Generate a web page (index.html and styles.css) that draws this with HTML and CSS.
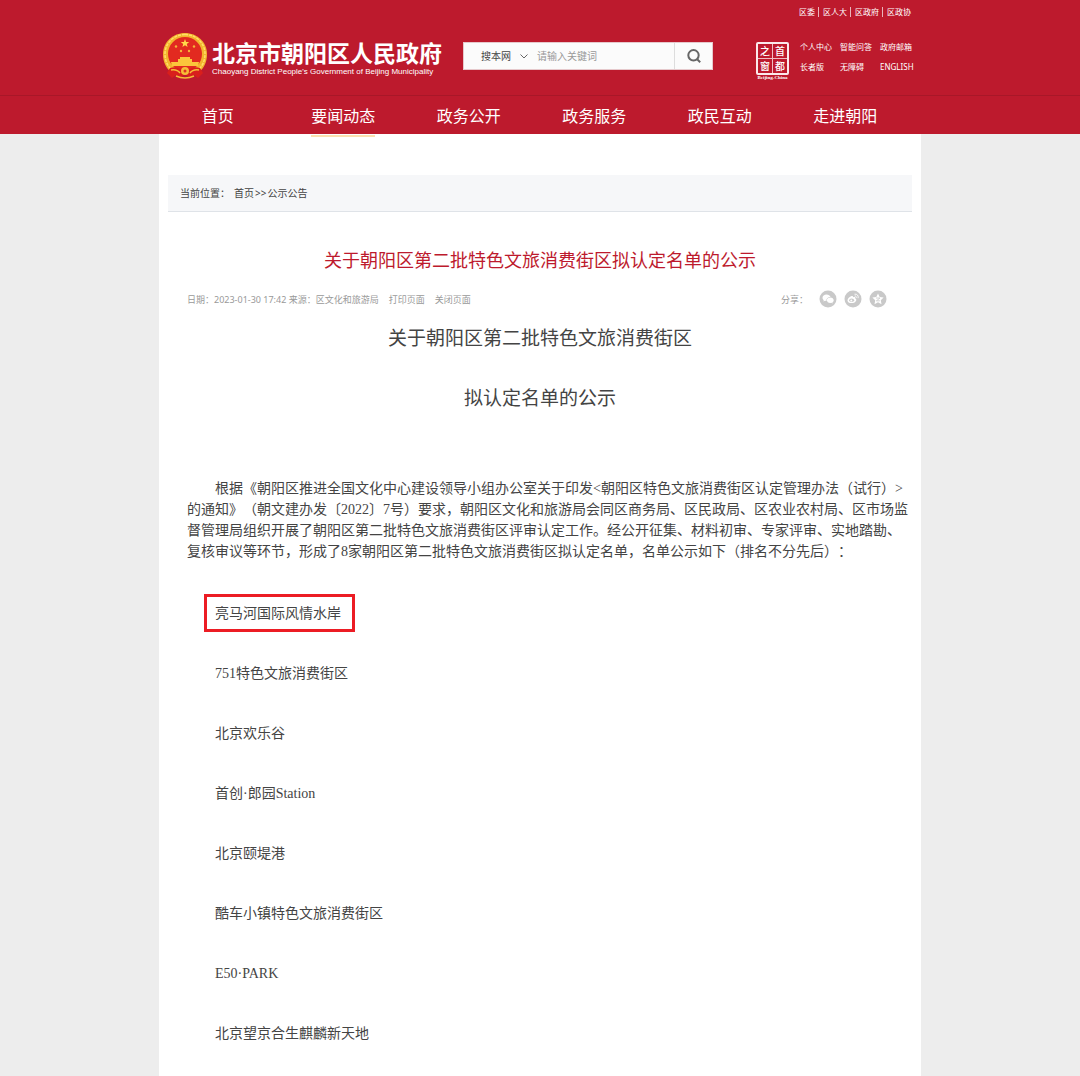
FILE: index.html
```html
<!DOCTYPE html>
<html lang="zh-CN">
<head>
<meta charset="utf-8">
<meta name="viewport" content="width=device-width, initial-scale=1">
<title>关于朝阳区第二批特色文旅消费街区拟认定名单的公示</title>
<link rel="stylesheet" href="styles.css">
</head>
<body>
<header class="site-header">
  <div class="wrap">
    <ul class="top-links">
      <li><a href="#">区委</a></li>
      <li><a href="#">区人大</a></li>
      <li><a href="#">区政府</a></li>
      <li><a href="#">区政协</a></li>
    </ul>
    <div class="masthead">
      <a class="brand" href="#">
        <svg class="emblem" viewBox="0 0 44 46" aria-hidden="true">
          <path d="M22 0C10 0 0 9 0 21c0 8 3 14 8 18l28 0c5-4 8-10 8-18C44 9 34 0 22 0z" fill="#f3b52e"/>
          <path d="M22 1.500C11 1.500 2 10 2 21c0 7 3 13 7 16" fill="none" stroke="#ffdf68" stroke-width="1.500" stroke-dasharray="3 1"/>
          <path d="M22 1.500C33 1.500 42 10 42 21c0 7-3 13-7 16" fill="none" stroke="#ffdf68" stroke-width="1.500" stroke-dasharray="3 1"/>
          <circle cx="22" cy="21" r="17" fill="#e22a20"/>
          <path d="M22 6l1.100 2.900 3.100.1-2.400 1.900.8 3-2.600-1.700-2.600 1.700.8-3-2.400-1.900 3.100-.1z" fill="#ffd84a"/>
          <g fill="#f5b43a"><circle cx="13" cy="13.500" r="1.200"/><circle cx="31" cy="13.500" r="1.200"/><circle cx="18" cy="18" r="1.200"/><circle cx="26" cy="18" r="1.200"/></g>
          <path d="M17 24h10v3H17zM15 26h14v3H15zM8 29h28l-1 4H9z" fill="#fbc63b"/>
          <path d="M7 35q6-2 10 1l5-2 5 2q4-3 10-1l3 5-5 5-4-3-5 2-4-3-4 3-5-2-4 3-5-5z" fill="#d91f1c"/>
          <circle cx="22" cy="38" r="4" fill="#f6bd37"/>
          <circle cx="22" cy="38" r="1.500" fill="#df3322"/>
          <path d="M8 37q6-1 9 3M36 37q-6-1-9 3M13 43q9 4 18 0" fill="none" stroke="#f6bd37" stroke-width="1.600"/>
        </svg>
        <span class="brand-text">
          <strong class="brand-name">北京市朝阳区人民政府</strong>
          <span class="brand-en">Chaoyang District People's Government of Beijing Municipality</span>
        </span>
      </a>
      <form class="search">
        <select class="search-scope" aria-label="搜索范围"><option>搜本网</option></select>
        <svg class="chevron" viewBox="0 0 8 5" aria-hidden="true"><path d="M.5.5L4 4 7.500.5" fill="none" stroke="#666"/></svg>
        <input class="search-input" type="text" placeholder="请输入关键词" aria-label="请输入关键词">
        <button class="search-button" type="submit" aria-label="搜索">
          <svg class="search-icon" viewBox="0 0 14 14" aria-hidden="true"><circle cx="6.500" cy="6.300" r="5.200"/><path d="M10.200 10.200l3 3"/></svg>
        </button>
      </form>
      <a class="capital" href="#">
        <span class="seal"><span>之</span><span>首</span><span>窗</span><span>都</span></span>
        <span class="seal-en">Beijing-China</span>
      </a>
      <ul class="quick-links">
        <li><a href="#">个人中心</a></li>
        <li><a href="#">智能问答</a></li>
        <li><a href="#">政府邮箱</a></li>
        <li><a href="#">长者版</a></li>
        <li><a href="#">无障碍</a></li>
        <li><a href="#">ENGLISH</a></li>
      </ul>
    </div>
  </div>
  <nav class="main-nav">
    <ul class="nav-list">
      <li><a href="#">首页</a></li>
      <li><a class="current" href="#">要闻动态</a></li>
      <li><a href="#">政务公开</a></li>
      <li><a href="#">政务服务</a></li>
      <li><a href="#">政民互动</a></li>
      <li><a href="#">走进朝阳</a></li>
    </ul>
  </nav>
</header>
<main class="page">
  <div class="breadcrumb"><span>当前位置：</span><span><a href="#">首页</a><span class="crumb-sep">&gt;&gt;</span><a href="#">公示公告</a></span></div>
  <article class="article">
    <h1 class="title">关于朝阳区第二批特色文旅消费街区拟认定名单的公示</h1>
    <div class="meta">
      <div class="meta-info">
        <span>日期：2023-01-30 17:42 来源：区文化和旅游局</span>
        <a href="#">打印页面</a>
        <a href="#">关闭页面</a>
      </div>
      <div class="share">
        <span class="share-label">分享：</span>
        <a href="#" aria-label="微信"><svg class="share-icon" viewBox="0 0 18 18"><circle cx="9" cy="9" r="8.500" fill="#c9c9c9"/><path d="M7.500 4.500c-2.300 0-4 1.400-4 3.200 0 1 .5 1.800 1.300 2.400l-.4 1.400 1.600-.8 1.500.2c-.4-2.400 1.500-4 4-4-.5-1.500-2-2.400-4-2.400z" fill="#fff"/><path d="M11.300 7.500c-2 0-3.400 1.100-3.400 2.700s1.500 2.700 3.400 2.700l1.100-.1 1.300.7-.3-1.200c.8-.5 1.300-1.200 1.300-2.100 0-1.500-1.500-2.700-3.400-2.700z" fill="#fff"/></svg></a>
        <a href="#" aria-label="微博"><svg class="share-icon" viewBox="0 0 18 18"><circle cx="9" cy="9" r="8.500" fill="#c9c9c9"/><path d="M7.500 6c1.200-.4 1.800.2 1.500 1.300 1.700-.5 2.700.1 2.200 1.200 1 .4 1.300 1 1 1.900-.5 1.600-2.400 2.700-4.700 2.700-2.400 0-4-1.100-4-2.700C3.500 8.800 5.600 6.600 7.500 6z" fill="#fff"/><ellipse cx="7.600" cy="10.300" rx="2.500" ry="1.800" fill="#c9c9c9"/><circle cx="7.300" cy="10.400" r="1" fill="#fff"/><path d="M10.500 4.200c2.600-.5 4.200 1.500 3.600 4M10.700 6c1.200-.2 1.900.7 1.600 1.800" fill="none" stroke="#fff" stroke-width=".9"/></svg></a>
        <a href="#" aria-label="QQ空间"><svg class="share-icon" viewBox="0 0 18 18"><circle cx="9" cy="9" r="8.500" fill="#c9c9c9"/><path d="M9 3.500l1.700 3.600 3.900.5-2.800 2.700.7 3.900L9 12.300l-3.500 1.900.7-3.900-2.800-2.700 3.900-.5z" fill="#fff"/><path d="M7 8h4l-3.600 2.800h3.500" fill="none" stroke="#c9c9c9" stroke-width=".8"/></svg></a>
      </div>
    </div>
    <h2 class="subtitle">关于朝阳区第二批特色文旅消费街区<br>拟认定名单的公示</h2>
    <div class="content">
      <p class="intro">根据《朝阳区推进全国文化中心建设领导小组办公室关于印发&lt;朝阳区特色文旅消费街区认定管理办法（试行）&gt;的通知》（朝文建办发〔2022〕7号）要求，朝阳区文化和旅游局会同区商务局、区民政局、区农业农村局、区市场监督管理局组织开展了朝阳区第二批特色文旅消费街区评审认定工作。经公开征集、材料初审、专家评审、实地踏勘、复核审议等环节，形成了8家朝阳区第二批特色文旅消费街区拟认定名单，名单公示如下（排名不分先后）：</p>
      <p><span class="marked">亮马河国际风情水岸</span></p>
      <p>751特色文旅消费街区</p>
      <p>北京欢乐谷</p>
      <p>首创·郎园Station</p>
      <p>北京颐堤港</p>
      <p>酷车小镇特色文旅消费街区</p>
      <p>E50·PARK</p>
      <p>北京望京合生麒麟新天地</p>
    </div>
  </article>
</main>
</body>
</html>
```

FILE: styles.css
```css
* { box-sizing: border-box; }

body {
  margin: 0;
  background: #ededed;
  color: #444;
  font-family: "Noto Sans", "Noto Sans CJK SC", sans-serif;
  text-spacing-trim: space-all;
}

a { color: inherit; text-decoration: none; }
ul { list-style: none; margin: 0; padding: 0; }
svg { display: block; }

.wrap { max-width: 762px; margin: 0 auto; }

/* Header */
.site-header { background: #bd1a2d; color: #fff; }

.top-links {
  display: flex;
  justify-content: flex-end;
  padding: 7px 10px 0 0;
  font-size: 8px;
  line-height: 10px;
}
.top-links li + li {
  margin-left: 3px;
  padding-left: 4px;
  border-left: 1px solid #e9b4ba;
}

.masthead {
  display: flex;
  align-items: flex-start;
  height: 78px;
  padding: 16px 0 0 4px;
}

.brand { display: flex; gap: 5px; width: 279px; }
.emblem { flex: none; width: 44px; height: 46px; }
.brand-text { display: flex; flex-direction: column; padding-top: 6px; }
.brand-name { font-size: 23px; line-height: 28px; white-space: nowrap; }
.brand-en {
  font-family: "Liberation Sans", Arial, sans-serif;
  font-size: 8px;
  line-height: 10px;
  white-space: nowrap;
}

.search {
  position: relative;
  display: flex;
  width: 250px;
  height: 28px;
  margin: 9px 0 0 21px;
  background: #fbfbfb;
  border: 1px solid #e6c9cc;
}
.search-scope,
.search-input,
.search-button {
  margin: 0;
  padding: 0;
  border: 0;
  background: none;
  font-family: inherit;
  font-size: 10px;
  color: #444;
}
.search-scope { appearance: none; width: 73px; padding-left: 17px; }
.chevron {
  position: absolute;
  left: 56px;
  top: 11px;
  width: 8px;
  height: 5px;
  pointer-events: none;
}
.search-input { flex: 1; min-width: 0; }
.search-input::placeholder { color: #999; opacity: 1; }
.search-button {
  display: grid;
  place-items: center;
  width: 38px;
  border-left: 1px solid #ddd;
}
.search-icon { width: 14px; height: 14px; fill: none; stroke: #666; stroke-width: 2; }

.capital { width: 35px; margin: 9px 0 0 42px; }
.seal {
  display: grid;
  grid-template-columns: 1fr 1fr;
  gap: 1px;
  width: 33px;
  margin: 0 auto;
  border: 2px solid #fbe9eb;
  border-radius: 2px;
  background: #f0bcc2;
  font-family: "Noto Sans CJK SC", sans-serif;
  font-size: 10px;
  font-weight: 500;
  line-height: 14px;
  text-align: center;
}
.seal span { background: #bd1a2d; }
.seal-en {
  display: block;
  font-family: "Liberation Serif", serif;
  font-size: 5px;
  font-weight: 700;
  line-height: 6px;
  text-align: center;
  white-space: nowrap;
}

.quick-links {
  display: grid;
  grid-template-columns: repeat(3, 40px);
  margin: 4px 0 0 10px;
  font-size: 8px;
  line-height: 20px;
  white-space: nowrap;
}

.main-nav { border-top: 1px solid #a81728; }
.nav-list {
  display: grid;
  grid-template-columns: repeat(6, 1fr);
  max-width: 770px;
  height: 38px;
  margin: 0 auto;
  padding-right: 17px;
  font-size: 16px;
  line-height: 40px;
  text-align: center;
}
.nav-list a { display: inline-block; }
.nav-list .current { height: 41px; border-bottom: 2px solid #fbdfb0; }

/* Page */
.page {
  max-width: 762px;
  margin: 0 auto;
  padding: 41px 9px 32px;
  background: #fff;
}

.breadcrumb {
  display: flex;
  gap: 4px;
  padding: 0 12px;
  border-bottom: 1px solid #dfe3e8;
  background: #f6f7f9;
  font-size: 10px;
  line-height: 36px;
}
.crumb-sep { padding: 0 1px; }

.article { padding: 34px 4px 0 19px; }

.title {
  margin: 0 15px 0 0;
  color: #bd1a2d;
  font-size: 18px;
  font-weight: 400;
  line-height: 28px;
  text-align: center;
}

.meta {
  display: flex;
  justify-content: space-between;
  align-items: center;
  height: 18px;
  margin: 16px 21px 0 0;
  color: #999;
  font-size: 9px;
}
.meta-info { display: flex; gap: 10px; }
.share { display: flex; align-items: center; gap: 7px; }
.share-label { margin-right: 4px; }
.share-icon { width: 18px; height: 18px; }

.subtitle {
  margin: 0 15px 0 0;
  font-size: 19px;
  font-weight: 400;
  line-height: 60px;
  text-align: center;
}

.content {
  margin-top: 50px;
  font-family: "Liberation Serif", "Noto Sans CJK SC", serif;
  font-size: 14px;
  line-height: 21px;
}
.content p { margin: 0 0 39px; text-indent: 28px; }
.content .intro { margin-bottom: 41px; }
.content p:last-child { margin-bottom: 0; }

/* Highlight frame round one entry */
.marked { position: relative; }
.marked::before {
  content: "";
  position: absolute;
  inset: -12px -14px -11px -11px;
  border: 3px solid #ec1c24;
}
```
